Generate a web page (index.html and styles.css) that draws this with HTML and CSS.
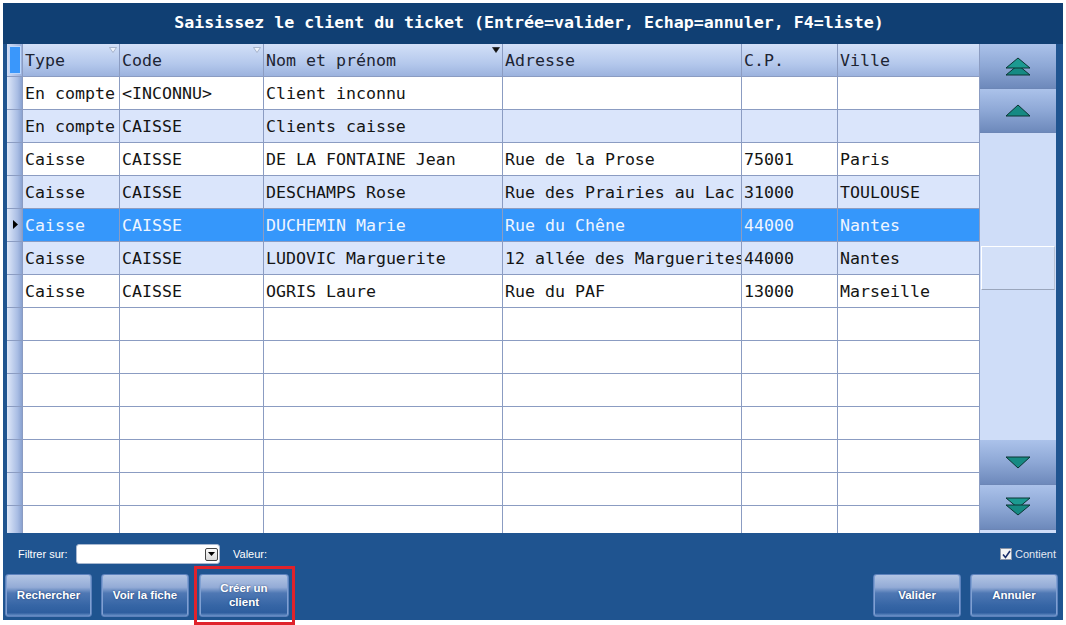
FILE: index.html
```html
<!DOCTYPE html>
<html>
<head>
<meta charset="utf-8">
<link rel="stylesheet" href="styles.css">
</head>
<body>
<div class="window">
  <div class="title">Saisissez le client du ticket (Entrée=valider, Echap=annuler, F4=liste)</div>
  <div class="main">
    <div class="grid">
      <div class="row head">
        <div class="ind"><span class="cur"></span></div>
        <div class="c">Type<svg class="sort" viewBox="0 0 8 6"><polygon points="0.5,0.5 7.5,0.5 4,5.5" fill="#eef2fa" stroke="#9aa8c0" stroke-width="0.8"/></svg></div>
        <div class="c">Code<svg class="sort" viewBox="0 0 8 6"><polygon points="0.5,0.5 7.5,0.5 4,5.5" fill="#eef2fa" stroke="#9aa8c0" stroke-width="0.8"/></svg></div>
        <div class="c">Nom et prénom<svg class="sort" viewBox="0 0 8 6"><polygon points="0.5,0.5 7.5,0.5 4,5.5" fill="#111" stroke="#111" stroke-width="0.6"/></svg></div>
        <div class="c">Adresse</div>
        <div class="c">C.P.</div>
        <div class="c">Ville</div>
      </div>
      <div class="row"><div class="ind"></div><div class="c">En compte</div><div class="c">&lt;INCONNU&gt;</div><div class="c">Client inconnu</div><div class="c"></div><div class="c"></div><div class="c"></div></div>
      <div class="row alt"><div class="ind"></div><div class="c">En compte</div><div class="c">CAISSE</div><div class="c">Clients caisse</div><div class="c"></div><div class="c"></div><div class="c"></div></div>
      <div class="row"><div class="ind"></div><div class="c">Caisse</div><div class="c">CAISSE</div><div class="c">DE LA FONTAINE Jean</div><div class="c">Rue de la Prose</div><div class="c">75001</div><div class="c">Paris</div></div>
      <div class="row alt"><div class="ind"></div><div class="c">Caisse</div><div class="c">CAISSE</div><div class="c">DESCHAMPS Rose</div><div class="c">Rue des Prairies au Lac</div><div class="c">31000</div><div class="c">TOULOUSE</div></div>
      <div class="row sel"><div class="ind"><svg class="arrow" viewBox="0 0 5 9"><polygon points="0,0 5,4.5 0,9" fill="#000"/></svg></div><div class="c">Caisse</div><div class="c">CAISSE</div><div class="c">DUCHEMIN Marie</div><div class="c">Rue du Chêne</div><div class="c">44000</div><div class="c">Nantes</div></div>
      <div class="row alt"><div class="ind"></div><div class="c">Caisse</div><div class="c">CAISSE</div><div class="c">LUDOVIC Marguerite</div><div class="c">12 allée des Marguerites</div><div class="c">44000</div><div class="c">Nantes</div></div>
      <div class="row"><div class="ind"></div><div class="c">Caisse</div><div class="c">CAISSE</div><div class="c">OGRIS Laure</div><div class="c">Rue du PAF</div><div class="c">13000</div><div class="c">Marseille</div></div>
      <div class="row"><div class="ind"></div><div class="c"></div><div class="c"></div><div class="c"></div><div class="c"></div><div class="c"></div><div class="c"></div></div>
      <div class="row"><div class="ind"></div><div class="c"></div><div class="c"></div><div class="c"></div><div class="c"></div><div class="c"></div><div class="c"></div></div>
      <div class="row"><div class="ind"></div><div class="c"></div><div class="c"></div><div class="c"></div><div class="c"></div><div class="c"></div><div class="c"></div></div>
      <div class="row"><div class="ind"></div><div class="c"></div><div class="c"></div><div class="c"></div><div class="c"></div><div class="c"></div><div class="c"></div></div>
      <div class="row"><div class="ind"></div><div class="c"></div><div class="c"></div><div class="c"></div><div class="c"></div><div class="c"></div><div class="c"></div></div>
      <div class="row"><div class="ind"></div><div class="c"></div><div class="c"></div><div class="c"></div><div class="c"></div><div class="c"></div><div class="c"></div></div>
      <div class="row"><div class="ind"></div><div class="c"></div><div class="c"></div><div class="c"></div><div class="c"></div><div class="c"></div><div class="c"></div></div>
    </div>
    <div class="scroll">
      <div class="sbtn h45"><svg width="26" height="20" viewBox="0 0 26 20"><polygon points="1,19 13,9 25,19" fill="#168a83" stroke="#0a3432" stroke-width="1"/><polygon points="1,12 13,2 25,12" fill="#1c9a91" stroke="#0a3432" stroke-width="1"/></svg></div>
      <div class="sbtn h44"><svg width="26" height="13" viewBox="0 0 26 13"><polygon points="1,12 13,1 25,12" fill="#168a83" stroke="#0a3432" stroke-width="1"/></svg></div>
      <div class="track"><div class="thumb"></div></div>
      <div class="sbtn h45"><svg width="26" height="13" viewBox="0 0 26 13"><polygon points="1,1 13,12 25,1" fill="#168a83" stroke="#0a3432" stroke-width="1"/></svg></div>
      <div class="sbtn h45"><svg width="26" height="20" viewBox="0 0 26 20"><polygon points="1,1 13,11 25,1" fill="#1c9a91" stroke="#0a3432" stroke-width="1"/><polygon points="1,8 13,18 25,8" fill="#168a83" stroke="#0a3432" stroke-width="1"/></svg></div>
      <div class="sfoot"></div>
    </div>
  </div>
  <div class="bottom">
    <div class="filters">
      <span class="lbl">Filtrer sur:</span>
      <div class="combo"><span class="drop"><svg width="7" height="4" viewBox="0 0 7 4"><polygon points="0,0 7,0 3.5,4" fill="#000"/></svg></span></div>
      <span class="lbl val">Valeur:</span>
      <span class="spacer"></span>
      <span class="check"><svg width="9" height="9" viewBox="0 0 9 9"><path d="M1 4.5 L3.5 7.5 L8 1" fill="none" stroke="#1a2f6a" stroke-width="1.6"/></svg></span>
      <span class="lbl chk">Contient</span>
    </div>
    <div class="actions">
      <button class="btn">Rechercher</button>
      <button class="btn">Voir la fiche</button>
      <button class="btn marked">Créer un<br>client</button>
      <span class="spacer"></span>
      <button class="btn">Valider</button>
      <button class="btn">Annuler</button>
    </div>
  </div>
</div>
</body>
</html>
```

FILE: styles.css
```css
html, body {
  margin: 0;
  padding: 0;
  background: #ffffff;
}
body {
  width: 1066px;
  height: 625px;
  overflow: hidden;
}
.window {
  margin: 3px 0 0 3px;
  width: 1060px;
  height: 617px;
  background: #1f5490;
  display: flex;
  flex-direction: column;
}
.title {
  height: 41px;
  line-height: 39px;
  background: #103f73;
  color: #ffffff;
  text-align: center;
  font-family: "DejaVu Sans Mono", monospace;
  font-weight: bold;
  font-size: 16.6px;
  white-space: nowrap;
  padding-right: 8px;
}
.main {
  height: 489px;
  display: flex;
  padding-left: 4px;
}
.grid {
  width: 973px;
  height: 489px;
  overflow: hidden;
  background: #ffffff;
  font-family: "DejaVu Sans Mono", monospace;
  font-size: 16.6px;
  color: #141414;
}
.row {
  display: grid;
  grid-template-columns: 16px 97px 144px 239px 239px 96px 142px;
  height: 33px;
  background: #ffffff;
}
.row.alt {
  background: #dae5fb;
}
.row.sel {
  background: #3597fb;
  color: #eef5ff;
}
.c {
  position: relative;
  box-sizing: border-box;
  border-right: 1px solid #8b9cc2;
  border-bottom: 1px solid #8b9cc2;
  padding-left: 2px;
  padding-top: 1px;
  line-height: 32px;
  white-space: nowrap;
  overflow: hidden;
}
.head {
  background: linear-gradient(#d3e0f8, #b4c8ec 60%, #9ab1dd);
}
.head .c {
  padding-top: 0;
  line-height: 33px;
  color: #1d2433;
}
.ind {
  position: relative;
  box-sizing: border-box;
  border-bottom: 1px solid #8b9cc2;
  border-right: 1px solid #8b9cc2;
  background: linear-gradient(to right, #dfe8f9, #a9bde4 70%, #8aa2d0);
}
.head .ind {
  background: linear-gradient(to right, #d0dcf5, #9ab0dc);
}
.cur {
  position: absolute;
  left: 2px;
  top: 2px;
  width: 10px;
  height: 26px;
  background: #3a97fb;
  border: 1px solid #bcd6fb;
}
.arrow {
  position: absolute;
  left: 6px;
  top: 11px;
  width: 5px;
  height: 9px;
}
.sort {
  position: absolute;
  right: 2px;
  top: 3px;
  width: 8px;
  height: 6px;
}
.scroll {
  width: 76px;
  display: flex;
  flex-direction: column;
  background: #cfddf8;
}
.sbtn {
  display: flex;
  align-items: center;
  justify-content: center;
  background: linear-gradient(#abc2ea, #8ea8d6 50%, #6d89bb);
  border-bottom: 1px solid #6c86b6;
  box-sizing: border-box;
}
.h45 { height: 45px; }
.h44 { height: 44px; }
.track {
  height: 307px;
  background: #cfddf8;
  padding-top: 113px;
  box-sizing: border-box;
}
.thumb {
  height: 44px;
  margin: 0 1px;
  background: #d3e0f8;
  border: 1px solid #ffffff;
  border-bottom: 1px solid #9aa6bc;
  border-right: 1px solid #b8c2d4;
  box-sizing: border-box;
}
.sfoot {
  height: 3px;
  background: #cfddf8;
}
.bottom {
  height: 87px;
  display: flex;
  flex-direction: column;
  font-family: "Liberation Sans", Arial, sans-serif;
}
.filters {
  margin-top: 11px;
  height: 20px;
  display: flex;
  align-items: center;
  padding-left: 15px;
  padding-right: 7px;
}
.lbl {
  color: #ffffff;
  font-size: 11px;
}
.filters .lbl:first-child {
  width: 58px;
}
.combo {
  width: 144px;
  height: 20px;
  box-sizing: border-box;
  background: #ffffff;
  border: 1px solid #a8b8d0;
  border-radius: 3px;
  display: flex;
  align-items: center;
  justify-content: flex-end;
  padding-right: 1px;
}
.drop {
  width: 13px;
  height: 13px;
  box-sizing: border-box;
  border: 1px solid #444;
  border-radius: 2px;
  background: linear-gradient(#fbfbfb, #d9d9d9);
  display: flex;
  align-items: center;
  justify-content: center;
}
.val {
  margin-left: 13px;
}
.spacer {
  flex: 1;
}
.check {
  width: 12px;
  height: 12px;
  box-sizing: border-box;
  background: #f4f4f4;
  border: 1px solid #8a94a6;
  display: flex;
  align-items: center;
  justify-content: center;
  margin-right: 3px;
}
.chk {
  color: #e4e8f0;
}
.actions {
  margin-top: 10px;
  height: 43px;
  display: flex;
  padding-left: 2px;
  padding-right: 5px;
  gap: 9px;
}
.btn {
  position: relative;
  width: 88px;
  height: 43px;
  padding: 0;
  box-sizing: border-box;
  border: 1px solid #5d82bd;
  border-radius: 3px;
  background: linear-gradient(#b3c5e4 0%, #93abd6 30%, #4f78b4 44%, #3565a5 75%, #2e5e9f 92%, #6c92c8 100%);
  box-shadow: inset 1px 0 0 #7fa0d2, inset -1px 0 0 #7fa0d2;
  color: #ffffff;
  font-family: "Liberation Sans", Arial, sans-serif;
  font-weight: bold;
  font-size: 11.5px;
  line-height: 14px;
  text-shadow: 0 0 2px #203e70;
  padding-bottom: 2px;
}
.btn:first-child {
  width: 87px;
}
.marked {
  width: 90px;
  margin-left: 1px;
}
.marked::after {
  content: "";
  position: absolute;
  left: -6px;
  top: -9px;
  right: -7px;
  bottom: -9px;
  border: 3px solid #e0222b;
}
```
